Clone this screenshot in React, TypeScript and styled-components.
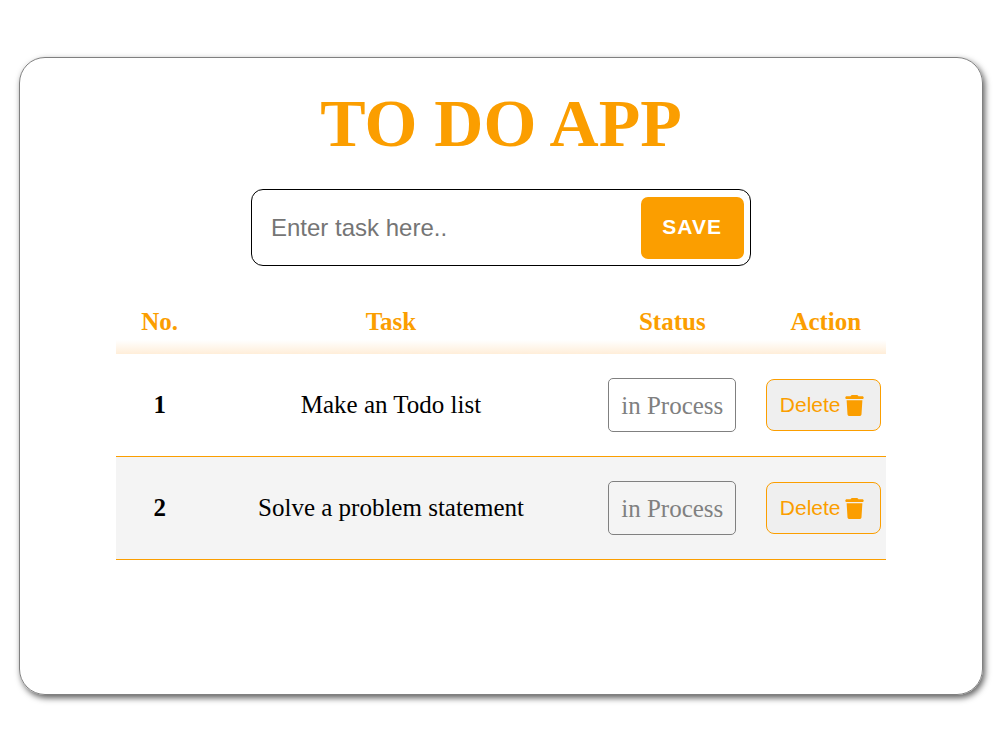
import React from "react";
import styled, { createGlobalStyle } from "styled-components";
import { FaTrash } from "react-icons/fa6";

const ORANGE = "#fb9e00";

const GlobalStyle = createGlobalStyle`
  * { box-sizing: border-box; }
  body {
    margin: 0;
    background: #fff;
    color: #000;
    font-family: "Liberation Serif", "Times New Roman", serif;
    font-size: 25px;
    line-height: 28px;
  }
`;

const Page = styled.div`
  display: flex;
  min-height: 100vh;
  padding: 57px 17px 55px 19px;
`;

const Card = styled.main`
  display: flex;
  flex: 1;
  flex-direction: column;
  align-items: center;
  padding: 24px 0;
  border: 1px solid #808080;
  border-radius: 26px;
  box-shadow: 2px 3px 6px #606060;
`;

const Title = styled.h1`
  margin: 0 0 25px;
  color: ${ORANGE};
  font-size: 68px;
  line-height: 82px;
`;

const TaskForm = styled.form`
  display: flex;
  width: 500px;
  max-width: 90%;
  margin-bottom: 25px;
  padding: 7px 6px 6px;
  border: 1px solid #000;
  border-radius: 12px;
`;

const TaskInput = styled.input`
  flex: 1;
  min-width: 0;
  padding: 0 13px;
  border: 0;
  outline: 0;
  background: transparent;
  font-family: "Liberation Sans", Arial, sans-serif;
  font-size: 24px;

  &::placeholder { color: #757575; }
`;

const SaveButton = styled.button`
  height: 62px;
  padding: 0 22px 2px 21px;
  border: 0;
  border-radius: 7px;
  background: ${ORANGE};
  color: #fff;
  font-family: "Liberation Sans", Arial, sans-serif;
  font-size: 21px;
  font-weight: 700;
  letter-spacing: 1px;
`;

const TaskTable = styled.table`
  width: 80%;
  border-collapse: separate;
  border-spacing: 0;
  table-layout: fixed;
  text-align: center;
`;

const HeadRow = styled.tr`
  background: linear-gradient(to top, #ffeed9, #fff) bottom / 100% 14px no-repeat;
`;

const HeadCell = styled.th<{ $width?: string }>`
  width: ${(p) => p.$width ?? "auto"};
  height: 63px;
  padding: 0 0 1px;
  color: ${ORANGE};
`;

const TaskRow = styled.tr`
  &:nth-child(even) { background: #f4f4f4; }

  > * {
    height: 103px;
    padding: 0;
    border-bottom: 1px solid ${ORANGE};
  }
`;

const Status = styled.span`
  display: inline-block;
  padding: 13px 12px 12px;
  border: 1px solid #808080;
  border-radius: 5px;
  color: #808080;
  line-height: 27px;
  vertical-align: middle;
`;

const ActionCell = styled.td`
  text-align: left;
`;

const DeleteButton = styled.button`
  display: inline-flex;
  align-items: center;
  gap: 3px;
  height: 52px;
  padding: 0 15px 0 13px;
  border: 1px solid ${ORANGE};
  border-radius: 8px;
  background: #efefef;
  color: ${ORANGE};
  font-family: "Liberation Sans", Arial, sans-serif;
  font-size: 21px;
  vertical-align: middle;
`;

const tasks = ["Make an Todo list", "Solve a problem statement"];

export default function App() {
  return (
    <Page>
      <GlobalStyle />
      <Card>
        <Title>TO DO APP</Title>
        <TaskForm onSubmit={(e) => e.preventDefault()}>
          <TaskInput type="text" aria-label="Task" placeholder="Enter task here.." />
          <SaveButton type="submit">SAVE</SaveButton>
        </TaskForm>
        <TaskTable>
          <thead>
            <HeadRow>
              <HeadCell scope="col" $width="87px">No.</HeadCell>
              <HeadCell scope="col">Task</HeadCell>
              <HeadCell scope="col" $width="187px">Status</HeadCell>
              <HeadCell scope="col" $width="120px">Action</HeadCell>
            </HeadRow>
          </thead>
          <tbody>
            {tasks.map((task, index) => (
              <TaskRow key={task}>
                <th scope="row">{index + 1}</th>
                <td>{task}</td>
                <td><Status>in Process</Status></td>
                <ActionCell>
                  <DeleteButton type="button">
                    Delete
                    <FaTrash aria-hidden="true" />
                  </DeleteButton>
                </ActionCell>
              </TaskRow>
            ))}
          </tbody>
        </TaskTable>
      </Card>
    </Page>
  );
}
